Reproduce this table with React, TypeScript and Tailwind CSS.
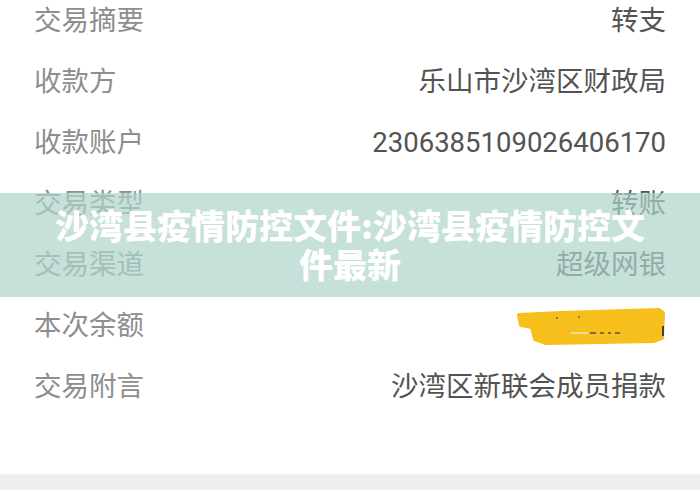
import React from "react";

const rows: { label: string; value: string | null }[] = [
  { label: "交易摘要", value: "转支" },
  { label: "收款方", value: "乐山市沙湾区财政局" },
  { label: "收款账户", value: "2306385109026406170" },
  { label: "交易类型", value: "转账" },
  { label: "交易渠道", value: "超级网银" },
  { label: "本次余额", value: null },
  { label: "交易附言", value: "沙湾区新联会成员捐款" },
];

function Scribble() {
  return (
    <svg width="150" height="40" viewBox="0 0 150 40" className="block">
      <path
        d="M3 8 L45 6 L143 3 L147 6 L146 31 L138 34 L30 36 L19 32 L16 20 L5 18 Z"
        fill="#f7bf1c"
        stroke="#f7bf1c"
        strokeWidth="4"
        strokeLinejoin="round"
      />
      <path d="M55 26 L72 26" stroke="#ece6d0" strokeWidth="1.5" />
      <path d="M74 26 L80 26 M84 26 L88 26 M92 26 L95 26 M99 26 L104 26" stroke="#5a5040" strokeWidth="1.5" />
      <path d="M40 11 L42 11 M62 10 L64 10" stroke="#7a6a40" strokeWidth="1.5" />
      <path d="M147 19 L147 29" stroke="#4a4030" strokeWidth="2" />
    </svg>
  );
}

export default function App() {
  return (
    <div
      className="relative w-[700px] h-[490px] overflow-hidden bg-white"
      style={{ fontFamily: 'Roboto, "Noto Sans CJK SC", sans-serif' }}
    >
      <div className="flex flex-col mt-[-10px]">
        {rows.map((r) => (
          <div
            key={r.label}
            className="flex items-center justify-between h-[61px] px-[34px] text-[27.5px] leading-none"
          >
            <span className="text-[#8e8e8e]">{r.label}</span>
            {r.value ? (
              <span className="text-[#535353]">{r.value}</span>
            ) : (
              <span className="mt-[2px]">
                <Scribble />
              </span>
            )}
          </div>
        ))}
      </div>

      <div className="absolute left-0 right-0 bottom-0 h-[16px] bg-[#efefef] border-t border-[#f4f4f4]" />

      <div className="absolute left-0 right-0 top-[193px] h-[104px] bg-[#aed3ca]/70 flex items-center justify-center">
        <div
          className="w-[620px] text-center text-white font-black text-[34px] leading-[39px] mt-[-2px]"
          style={{ fontFamily: '"Noto Sans CJK SC", sans-serif' }}
        >
          沙湾县疫情防控文件:沙湾县疫情防控文件最新
        </div>
      </div>
    </div>
  );
}
